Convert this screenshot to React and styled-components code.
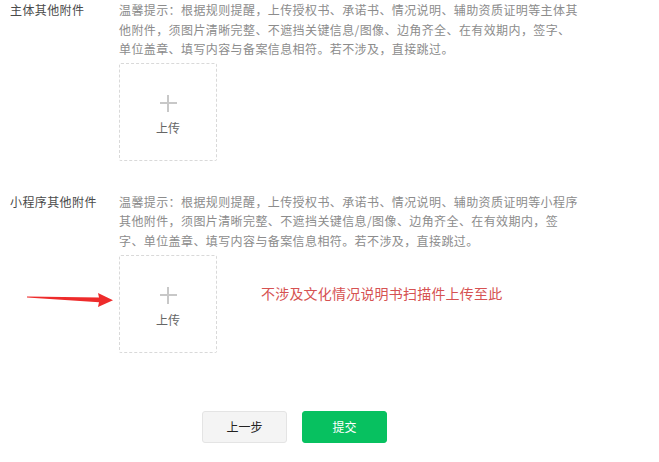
import React from 'react'
import styled, { createGlobalStyle } from 'styled-components'

const GlobalStyle = createGlobalStyle`
    html, body {
        margin: 0;
        padding: 0;
        background: #ffffff;
    }
    body {
        font-family: "Noto Sans CJK SC", "Liberation Sans", sans-serif;
        text-spacing-trim: space-all;
    }
`

const sections = [
    {
        label: '主体其他附件',
        hint: '温馨提示：根据规则提醒，上传授权书、承诺书、情况说明、辅助资质证明等主体其他附件，须图片清晰完整、不遮挡关键信息/图像、边角齐全、在有效期内，签字、单位盖章、填写内容与备案信息相符。若不涉及，直接跳过。',
    },
    {
        label: '小程序其他附件',
        hint: '温馨提示：根据规则提醒，上传授权书、承诺书、情况说明、辅助资质证明等小程序其他附件，须图片清晰完整、不遮挡关键信息/图像、边角齐全、在有效期内，签字、单位盖章、填写内容与备案信息相符。若不涉及，直接跳过。',
        note: '不涉及文化情况说明书扫描件上传至此',
    },
]

function App() {
    return (
        <>
            <GlobalStyle />
            <Page>
                {sections.map((section, index) => (
                    <Section key={index} $last={index === sections.length - 1}>
                        <Label>{section.label}</Label>
                        <Content>
                            <Hint>{section.hint}</Hint>
                            <UploadRow>
                                {section.note && (
                                    <Arrow width="86" height="14" viewBox="0 0 86 14">
                                        <polygon points="0,3.6 72,4.6 71,0 86,7.2 71,14 72,9.2 0,4.4" fill="#ee2b2b" />
                                    </Arrow>
                                )}
                                <UploadBox>
                                    <Plus />
                                    <UploadText>上传</UploadText>
                                </UploadBox>
                                {section.note && <Note>{section.note}</Note>}
                            </UploadRow>
                        </Content>
                    </Section>
                ))}
                <Actions>
                    <Button>上一步</Button>
                    <Button $primary>提交</Button>
                </Actions>
            </Page>
        </>
    )
}

const Page = styled.div`
    width: 659px;
    min-height: 462px;
    padding-left: 10px;
    box-sizing: border-box;
`

const Section = styled.div`
    display: flex;
    align-items: flex-start;
    margin-bottom: ${p => p.$last ? '58px' : '31px'};
`

const Label = styled.div`
    width: 109px;
    flex-shrink: 0;
    font-size: 12px;
    letter-spacing: 0.4px;
    line-height: 19.5px;
    color: #4a4a4a;
`

const Content = styled.div`
    display: flex;
    flex-direction: column;
`

const Hint = styled.div`
    width: 462px;
    font-size: 12px;
    letter-spacing: 0.4px;
    line-height: 19.6px;
    color: #8c8c8c;
`

const UploadRow = styled.div`
    position: relative;
    display: flex;
    align-items: flex-start;
    margin-top: 4px;
`

const UploadBox = styled.div`
    width: 98px;
    height: 98px;
    box-sizing: border-box;
    border: 1px dashed #d9d9d9;
    border-radius: 2px;
    display: flex;
    flex-direction: column;
    align-items: center;
    padding-top: 31px;
    gap: 8px;
`

const Plus = styled.div`
    position: relative;
    width: 17px;
    height: 17px;
    &::before, &::after {
        content: '';
        position: absolute;
        background: #c8c8c8;
    }
    &::before {
        left: 0;
        right: 0;
        top: 7.5px;
        height: 2px;
    }
    &::after {
        top: 0;
        bottom: 0;
        left: 7.5px;
        width: 2px;
    }
`

const UploadText = styled.div`
    font-size: 12px;
    line-height: 16px;
    color: #666666;
`

const Note = styled.div`
    margin-left: 44px;
    margin-top: 28px;
    font-size: 14px;
    line-height: 20px;
    letter-spacing: 0.2px;
    color: #d65252;
`

const Arrow = styled.svg`
    position: absolute;
    left: -92px;
    top: 38px;
`

const Actions = styled.div`
    display: flex;
    gap: 15px;
    padding-left: 192px;
`

const Button = styled.button`
    width: 85px;
    height: 32px;
    border-radius: 3px;
    font-family: "Noto Sans CJK SC", "Liberation Sans", sans-serif;
    font-size: 12px;
    border: 1px solid ${p => p.$primary ? '#07c160' : '#e4e4e4'};
    background: ${p => p.$primary ? '#07c160' : '#f4f4f4'};
    color: ${p => p.$primary ? '#ffffff' : '#222222'};
    cursor: pointer;
`

export default App
